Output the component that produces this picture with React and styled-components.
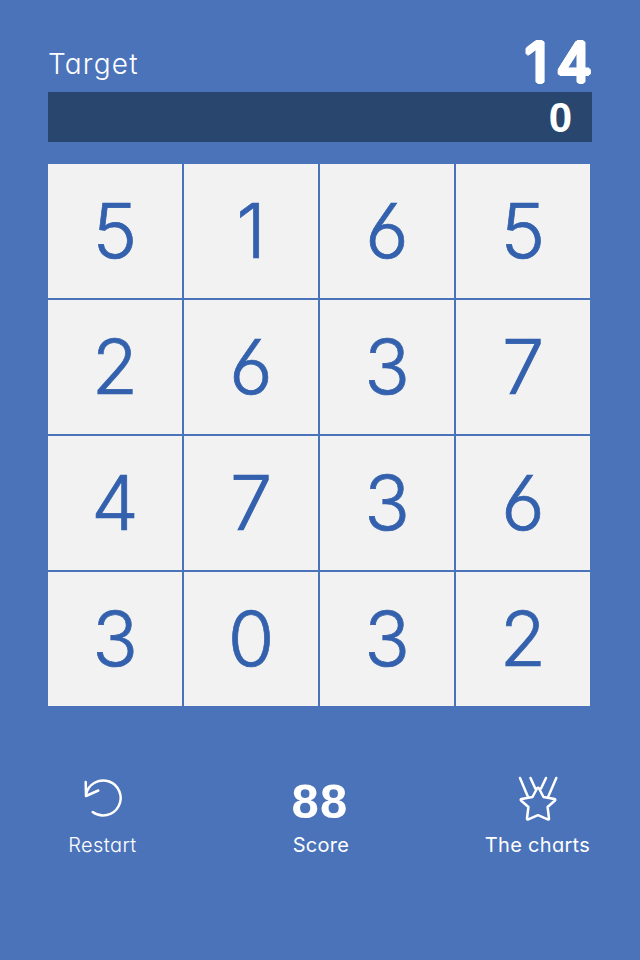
import React from "react";
import styled, { createGlobalStyle } from "styled-components";

const GlobalStyle = createGlobalStyle`
  * { box-sizing: border-box; }
  html, body { margin: 0; padding: 0; background: #4b73b9; }
`;

const Screen = styled.main`
  display: flex;
  flex-direction: column;
  width: 640px;
  height: 960px;
  padding: 32px 48px 0;
  overflow: hidden;
  background: #4b73b9;
  color: #fff;
  font-family: Inter, "Liberation Sans", sans-serif;
`;

const Header = styled.header`
  display: flex;
  justify-content: space-between;
  height: 60px;
`;

const TargetLabel = styled.span`
  font-size: 28px;
  line-height: 64px;
  font-weight: 300;
  letter-spacing: 1.2px;
  font-feature-settings: "cv11";
`;

const TargetValue = styled.strong`
  margin-right: -9px;
  font-size: 55px;
  font-weight: 400;
  line-height: 60px;
  letter-spacing: 9px;
  text-shadow: 2px 0 #fff, -2px 0 #fff, 0 2px #fff, 0 -2px #fff,
    1.4px 1.4px #fff, -1.4px 1.4px #fff, 1.4px -1.4px #fff, -1.4px -1.4px #fff,
    1px 0 #fff, -1px 0 #fff, 0 1px #fff, 0 -1px #fff;
`;

const SumBar = styled.div`
  height: 50px;
  padding-right: 20px;
  background: #29466f;
  font: bold 42px/52px "Liberation Sans", sans-serif;
  text-align: right;
`;

const Board = styled.section`
  display: grid;
  grid-template-columns: repeat(4, 134px);
  grid-auto-rows: 134px;
  gap: 2px;
  margin-top: 22px;
`;

const Tile = styled.button`
  display: flex;
  align-items: center;
  justify-content: center;
  padding: 0;
  border: 0;
  background: #f2f2f2;
  color: #3461ad;
  font-family: Inter, sans-serif;
  font-feature-settings: "cv03";
  font-weight: 300;
  font-size: 75.5px;
  line-height: 134px;
  -webkit-text-stroke: 0.7px #3461ad;
`;

const Footer = styled.footer`
  display: flex;
  justify-content: space-between;
  height: 90px;
  margin-top: 68px;
`;

const Action = styled.div`
  display: flex;
  flex-direction: column;
  align-items: center;
  width: ${(p) => p.$width}px;
`;

const Visual = styled.div`
  display: flex;
  align-items: center;
  justify-content: center;
  height: 56px;
`;

const Score = styled.strong`
  font: bold 49px/54px "Liberation Sans", sans-serif;
  padding-bottom: 2px;
  letter-spacing: 1.2px;
`;

const Caption = styled.span`
  font-size: 20px;
  line-height: 30px;
  font-weight: ${(p) => p.$weight || 400};
  letter-spacing: ${(p) => p.$spacing || 0}px;
  padding-left: ${(p) => p.$indent || 0}px;
  font-feature-settings: "cv11";
  white-space: nowrap;
`;

const Icon = styled.svg`
  fill: none;
  stroke: #fff;
  stroke-width: 2.5;
  stroke-linecap: round;
  stroke-linejoin: round;
`;

const tiles = [5, 1, 6, 5, 2, 6, 3, 7, 4, 7, 3, 6, 3, 0, 3, 2];

export default function App() {
  return (
    <Screen>
      <GlobalStyle />
      <Header>
        <TargetLabel>Target</TargetLabel>
        <TargetValue>14</TargetValue>
      </Header>
      <SumBar>0</SumBar>
      <Board>
        {tiles.map((n, i) => (
          <Tile key={i}>{n}</Tile>
        ))}
      </Board>
      <Footer>
        <Action $width={109}>
          <Visual>
            <Icon width="42" height="56" viewBox="81.5 774 42 56">
              <path d="M85.5 794.5A17.5 17.5 0 1 1 92.2 812M85.2 782L85.5 796L97.8 790.5" />
            </Icon>
          </Visual>
          <Caption $weight={300} $spacing={0.4}>Restart</Caption>
        </Action>
        <Action $width={109}>
          <Visual>
            <Score>88</Score>
          </Visual>
          <Caption $spacing={0.3} $indent={2}>Score</Caption>
        </Action>
        <Action $width={109}>
          <Visual>
            <Icon width="42" height="56" viewBox="517 774 42 56">
              <path d="M520 778L527.8 796.5M530.5 778L535.3 788.5M546 778L541 788.5M556.3 778L548.3 796.5M537 788.5Q538 787.2 539 788.5L543.5 797L554.5 799Q555.8 799.5 555 800.5L547.6 807L549 818.5Q549 819.8 547.7 819.3L538 815.2L528.3 819.3Q527 819.8 527 818.5L528.4 807L521 800.5Q520.2 799.5 521.5 799L532.5 797Z" />
            </Icon>
          </Visual>
          <Caption $spacing={0.3}>The charts</Caption>
        </Action>
      </Footer>
    </Screen>
  );
}
